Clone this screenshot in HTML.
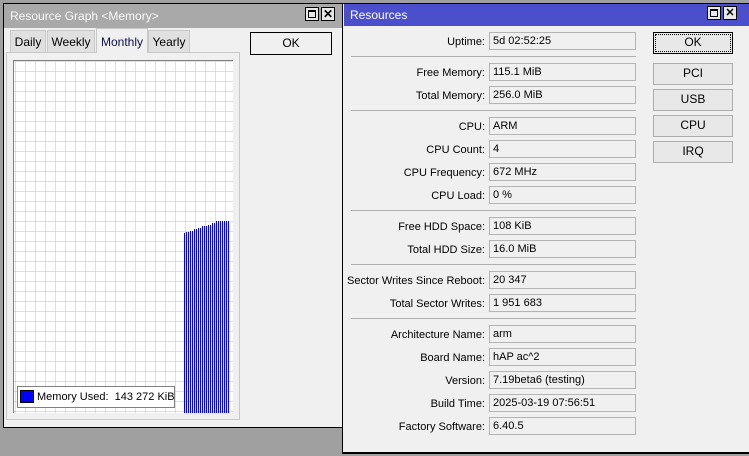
<!DOCTYPE html><html><head><style>
body{margin:0;width:749px;height:456px;background:#a0a0a0;position:relative;overflow:hidden;font-family:"Liberation Sans",sans-serif;font-size:11px;color:#000}
.a{position:absolute;box-sizing:border-box;white-space:nowrap}
.win{background:#f0f0f0;border:1px solid #000}
.btn{background:#e8e8e8;border:1px solid #adadad;text-align:center;line-height:19px;font-size:12px}
.lbl{text-align:right;width:200px;left:285px;margin-top:2px}
.fld{left:489px;width:147px;height:18px;border:1px solid #b4b4b4;background:#f0f0f0;padding-left:3px;line-height:16px}
.sep{left:351px;width:285px;height:1px;background:#b0b0b0}
.tab{border:1px solid #c8c8c8;border-bottom:none;background:#e0e0e0;text-align:center;line-height:22px;font-size:12px}
.wb{width:14px;height:14px;border:1px solid #000;background:#e8e8e8;top:7px}
</style></head><body>
<div class="a win" style="left:3px;top:3px;width:341px;height:425px"></div>
<div class="a" style="left:4px;top:4px;width:339px;height:24px;background:#a9a9a9;color:#fafafa;line-height:24px;padding-left:6px;font-size:12px">Resource Graph &lt;Memory&gt;</div>
<div class="a wb" style="left:305px"><div class="a" style="left:2px;top:2px;width:8px;height:8px;border:1px solid #000;border-top-width:2px"></div></div>
<div class="a wb" style="left:321px;text-align:center;line-height:12px;font-weight:bold;font-size:12px">✕</div>
<div class="a" style="left:6px;top:52px;width:234px;height:368px;border:1px solid #c8c8c8;background:#f0f0f0"></div>
<div class="a tab" style="left:10px;top:30px;width:36px;height:22px">Daily</div>
<div class="a tab" style="left:47px;top:30px;width:48px;height:22px">Weekly</div>
<div class="a tab" style="left:96px;top:28px;width:52px;height:25px;background:#f0f0f0;line-height:26px;color:#10104a">Monthly</div>
<div class="a tab" style="left:148px;top:30px;width:42px;height:22px">Yearly</div>
<div class="a btn" style="left:250px;top:32px;width:82px;height:23px;border-color:#000;background:#f0f0f0;line-height:21px">OK</div>
<svg class="a" style="left:13px;top:60px" width="220" height="353">
<defs><pattern id="g" width="10" height="10" patternUnits="userSpaceOnUse" x="2" y="1"><path d="M0 0H10M0 0V10" stroke="#cccccc" stroke-width="1.2" fill="none"/></pattern>
<pattern id="b" width="2" height="10" patternUnits="userSpaceOnUse" x="171"><rect width="1" height="10" fill="#0000ff"/></pattern></defs>
<rect width="220" height="353" fill="#fff"/>
<rect width="220" height="353" fill="url(#g)"/>
<path d="M0.5 353V0.5H220" stroke="#808080" fill="none"/>
<path d="M171 173h2v-1h4v-1h4v-2h4v-1h4v-2h6v-1h4v-2h4v-2h14V353H171Z" fill="url(#b)"/>
</svg>
<div class="a" style="left:17px;top:386px;width:158px;height:22px;border:1px solid #808080;background:#fff;line-height:20px;padding-left:19px">Memory Used:&nbsp; 143 272 KiB</div>
<div class="a" style="left:20px;top:390px;width:14px;height:13px;background:#0000ff;border:1px solid #000"></div>

<div class="a win" style="left:342px;top:3px;width:407px;height:451px;border-width:1px 0 2px 1px"></div>
<div class="a" style="left:344px;top:4px;width:405px;height:22px;background:#4b4fcc;color:#fff;line-height:22px;padding-left:6px;font-size:12px">Resources</div>
<div class="a wb" style="left:707px;top:6px"><div class="a" style="left:2px;top:2px;width:8px;height:8px;border:1px solid #000;border-top-width:2px"></div></div>
<div class="a wb" style="left:723px;top:6px;text-align:center;line-height:12px;font-weight:bold">✕</div>
<div class="a btn" style="left:653px;top:32px;width:80px;height:22px;border:1px solid #000;outline:1px dotted #000;outline-offset:-3px">OK</div>
<div class="a btn" style="left:653px;top:63px;width:80px;height:22px">PCI</div>
<div class="a btn" style="left:653px;top:89px;width:80px;height:22px">USB</div>
<div class="a btn" style="left:653px;top:115px;width:80px;height:22px">CPU</div>
<div class="a btn" style="left:653px;top:141px;width:80px;height:22px">IRQ</div>

<div class="a lbl" style="top:34px">Uptime:</div><div class="a fld" style="top:32px">5d 02:52:25</div>
<div class="a sep" style="top:56px"></div>
<div class="a lbl" style="top:65px">Free Memory:</div><div class="a fld" style="top:63px">115.1 MiB</div>
<div class="a lbl" style="top:88px">Total Memory:</div><div class="a fld" style="top:86px">256.0 MiB</div>
<div class="a sep" style="top:110px"></div>
<div class="a lbl" style="top:119px">CPU:</div><div class="a fld" style="top:117px">ARM</div>
<div class="a lbl" style="top:142px">CPU Count:</div><div class="a fld" style="top:140px">4</div>
<div class="a lbl" style="top:165px">CPU Frequency:</div><div class="a fld" style="top:163px">672 MHz</div>
<div class="a lbl" style="top:188px">CPU Load:</div><div class="a fld" style="top:186px">0 %</div>
<div class="a sep" style="top:210px"></div>
<div class="a lbl" style="top:219px">Free HDD Space:</div><div class="a fld" style="top:217px">108 KiB</div>
<div class="a lbl" style="top:242px">Total HDD Size:</div><div class="a fld" style="top:240px">16.0 MiB</div>
<div class="a sep" style="top:264px"></div>
<div class="a lbl" style="top:273px">Sector Writes Since Reboot:</div><div class="a fld" style="top:271px">20 347</div>
<div class="a lbl" style="top:296px">Total Sector Writes:</div><div class="a fld" style="top:294px">1 951 683</div>
<div class="a sep" style="top:318px"></div>
<div class="a lbl" style="top:327px">Architecture Name:</div><div class="a fld" style="top:325px">arm</div>
<div class="a lbl" style="top:350px">Board Name:</div><div class="a fld" style="top:348px">hAP ac^2</div>
<div class="a lbl" style="top:373px">Version:</div><div class="a fld" style="top:371px">7.19beta6 (testing)</div>
<div class="a lbl" style="top:396px">Build Time:</div><div class="a fld" style="top:394px">2025-03-19 07:56:51</div>
<div class="a lbl" style="top:419px">Factory Software:</div><div class="a fld" style="top:417px">6.40.5</div>
</body></html>
